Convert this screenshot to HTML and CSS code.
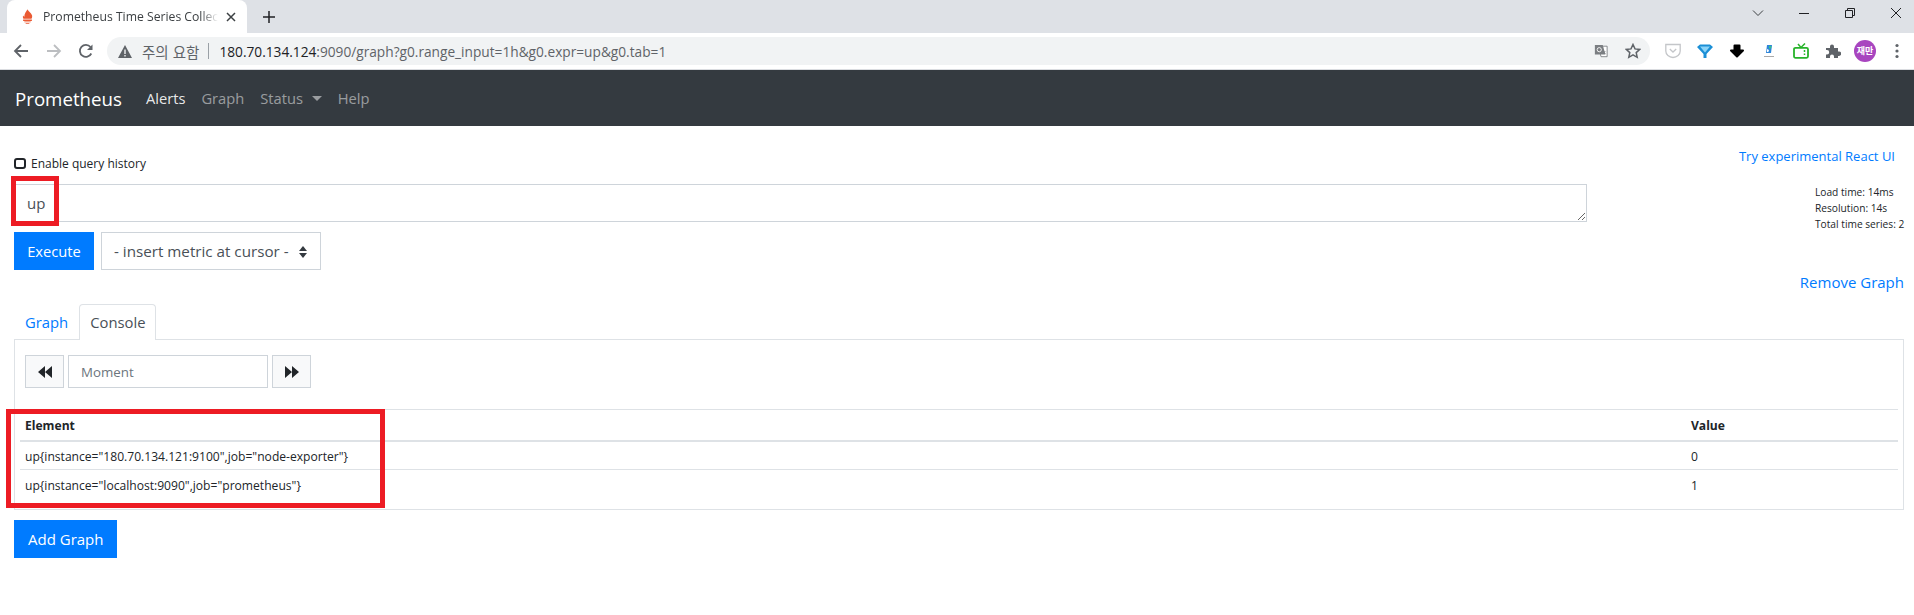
FILE: index.html
```html
<!DOCTYPE html>
<html lang="ko">
<head>
<meta charset="utf-8">
<title>Prometheus Time Series Collection and Processing Server</title>
<link rel="stylesheet" href="styles.css">
</head>
<body>
<header class="chrome">
  <div class="tabstrip">
    <div class="tab">
      <svg class="favicon" viewBox="0 0 12 16"><path fill="#ea5a33" d="M6 0c.5 2 4 3.500 5 7 .3 1.500-.2 2.800-.7 3.500H1.700C1 9.500.7 8.300 1.200 6.800c.4.700.8 1.100 1.400 1.400C2.300 5 4.600 2.800 6 0z"/><path fill="#ea5a33" d="M1.200 11.300h9.600v1.500H1.200zM2.500 13.400h7v1H2.500zM4 15h4v1H4z"/></svg>
      <span class="tab-title">Prometheus Time Series Collection and Processing Server</span>
      <svg class="tab-close" viewBox="0 0 10 10"><path d="M1 1l8 8M9 1l-8 8" stroke="#3c4043" stroke-width="1.500"/></svg>
    </div>
    <svg class="new-tab" viewBox="0 0 12 12"><path d="M6 0v12M0 6h12" stroke="#202124" stroke-width="1.500"/></svg>
    <div class="win-controls">
      <svg class="win-btn" viewBox="0 0 12 12"><path d="M1 3.500l5 5 5-5" fill="none" stroke="#3c4043"/></svg>
      <svg class="win-btn" viewBox="0 0 12 12"><path d="M1 6.500h10" stroke="#202124"/></svg>
      <svg class="win-btn" viewBox="0 0 12 12"><path d="M1.500 3.500h7v7h-7zM3.500 3.500v-2h7v7h-2" fill="none" stroke="#202124"/></svg>
      <svg class="win-btn" viewBox="0 0 12 12"><path d="M1 1l10 10M11 1L1 11" stroke="#202124"/></svg>
    </div>
  </div>
  <div class="toolbar">
    <svg class="tool back" viewBox="0 0 16 16"><path d="M15 8H2M8 2L2 8l6 6" fill="none" stroke="#5f6368" stroke-width="1.800"/></svg>
    <svg class="tool fwd" viewBox="0 0 16 16"><path d="M1 8h13M8 2l6 6-6 6" fill="none" stroke="#bcbec1" stroke-width="1.800"/></svg>
    <svg class="tool reload" viewBox="0 0 16 16"><path d="M13.300 10.500A6 6 0 1 1 12.500 4" fill="none" stroke="#5f6368" stroke-width="1.800"/><path d="M14.500 1.500V7H9z" fill="#5f6368"/></svg>
    <div class="omnibox">
      <svg class="warn" viewBox="0 0 14 13"><path d="M7 0l7 13H0z" fill="#5f6368"/><path d="M6.300 4.500h1.400v4.500H6.300zM6.300 10h1.400v1.400H6.300z" fill="#f1f3f4"/></svg>
      <span class="warn-text">주의 요함</span>
      <span class="omni-sep"></span>
      <span class="url"><span class="url-host">180.70.134.124</span>:9090/graph?g0.range_input=1h&amp;g0.expr=up&amp;g0.tab=1</span>
      <svg class="translate" viewBox="0 0 16 16"><path d="M5 2.500h10v12H8z" fill="#fff" stroke="#7b7e82"/><path d="M1 1h9l3 11H1z" fill="#7b7e82"/><circle cx="6" cy="6.500" r="2.400" fill="none" stroke="#fff"/><path d="M10 8l3 3M13 8l-3 3" stroke="#7b7e82"/></svg>
      <svg class="star" viewBox="0 0 16 16"><path d="M8 1.500l2 4.400 4.800.5-3.600 3.200 1 4.700L8 11.900l-4.200 2.400 1-4.700L1.200 6.400 6 5.900z" fill="none" stroke="#5f6368" stroke-width="1.500"/></svg>
    </div>
    <div class="extensions">
      <svg class="ext" viewBox="0 0 16 16"><path d="M.8 1.500h14.400v6.500a7.200 6.500 0 0 1-14.400 0z" fill="none" stroke="#c4c6c9" stroke-width="1.300"/><path d="M4.800 6L8 9l3.200-3" fill="none" stroke="#c4c6c9" stroke-width="1.300"/></svg>
      <svg class="ext" viewBox="0 0 16 16"><path d="M0 4l3-2.500h10L16 4 9.500 11v4h-3v-4z" fill="#1b8fd6"/><path d="M3 3.500h10L8 9.500z" fill="#8bd3f7"/></svg>
      <svg class="ext" viewBox="0 0 16 16"><path d="M5.500 2.500h5v5H14L8 13.500 2 7.500h3.500z" fill="#000" stroke="#000" stroke-width="2" stroke-linejoin="round"/></svg>
      <svg class="ext" viewBox="0 0 16 16"><path d="M6 2h5l-1 8H5z" fill="#2f86d9"/><path d="M8 3h2.500L9.800 5.500 8 5.500z" fill="#34c08a"/><path d="M6 6l2 1-.6 2H6z" fill="#fff"/><path d="M3 13.500h10" stroke="#aaa" stroke-width="1"/></svg>
      <svg class="ext" viewBox="0 0 16 16"><rect x="1" y="4.800" width="14" height="10" rx="1.500" fill="none" stroke="#27b32a" stroke-width="1.800"/><path d="M5 1l3 3.500 4-4" fill="none" stroke="#27b32a" stroke-width="1.500"/><path d="M11.500 7v2M11.500 10.500v1.500" stroke="#27b32a" stroke-width="1.500"/></svg>
      <svg class="ext" viewBox="0 0 16 16"><path d="M1 5h4V3.500a2 2 0 0 1 4 0V5h4v3.500h1a2.200 2.200 0 0 1 0 4.400h-1V15H9v-1.500a2 2 0 0 0-4 0V15H1v-3.500h1a2.200 2.200 0 0 0 0-4.400H1z" fill="#5f6368"/></svg>
      <span class="avatar">재만</span>
      <svg class="ext dots" viewBox="0 0 4 16"><circle cx="2" cy="2.500" r="1.600" fill="#5f6368"/><circle cx="2" cy="8" r="1.600" fill="#5f6368"/><circle cx="2" cy="13.500" r="1.600" fill="#5f6368"/></svg>
    </div>
  </div>
</header>

<nav class="navbar">
  <a class="brand">Prometheus</a>
  <a class="nav-link active">Alerts</a>
  <a class="nav-link">Graph</a>
  <a class="nav-link">Status <span class="caret"></span></a>
  <a class="nav-link">Help</a>
</nav>

<main class="page">
  <div class="query">
    <div class="query-left">
      <label class="history"><input class="history-box" type="checkbox"><span>Enable query history</span></label>
      <div class="expr-wrap">
        <textarea class="expr" rows="1">up</textarea>
        <div class="mark mark-expr"></div>
      </div>
      <div class="actions">
        <button class="btn-primary btn-exec">Execute</button>
        <div class="select-wrap"><select class="metric"><option>- insert metric at cursor -</option></select></div>
      </div>
    </div>
    <div class="query-right">
      <a class="react-link">Try experimental React UI</a>
      <div class="stats">Load time: 14ms<br>Resolution: 14s<br>Total time series: 2</div>
    </div>
  </div>

  <div class="remove-row"><a class="remove-link">Remove Graph</a></div>

  <div class="tabs">
    <a class="tab-link">Graph</a>
    <a class="tab-link tab-current">Console</a>
  </div>
  <section class="panel">
    <div class="moment-row">
      <button class="step"><svg viewBox="0 0 14 12"><path d="M7 0v12L0 6zM14 0v12L7 6z" fill="#212529"/></svg></button>
      <input class="moment" type="text" placeholder="Moment">
      <button class="step"><svg viewBox="0 0 14 12"><path d="M0 0v12l7-6zM7 0v12l7-6z" fill="#212529"/></svg></button>
    </div>
    <table class="results">
      <thead><tr><th class="col-el">Element</th><th>Value</th></tr></thead>
      <tbody>
        <tr><td>up{instance="180.70.134.121:9100",job="node-exporter"}</td><td>0</td></tr>
        <tr><td>up{instance="localhost:9090",job="prometheus"}</td><td>1</td></tr>
      </tbody>
    </table>
    <div class="mark mark-table"></div>
  </section>
  <button class="btn-primary add">Add Graph</button>
</main>
</body>
</html>
```
FILE: styles.css
```css
* { box-sizing: border-box; }
html, body { margin: 0; padding: 0; }
body {
  width: 1914px;
  height: 615px;
  overflow: hidden;
  background: #fff;
  color: #212529;
  font-family: "Open Sans", "Noto Sans CJK KR", sans-serif;
  font-size: 15px;
}
a { text-decoration: none; }

/* browser chrome */
.chrome { height: 70px; border-bottom: 1px solid #dadce0; }
.tabstrip {
  height: 33px;
  background: #dee1e6;
  display: flex;
  align-items: flex-start;
  padding-left: 7px;
}
.tab {
  width: 240px;
  height: 33px;
  background: #fff;
  border-radius: 8px 8px 0 0;
  display: flex;
  align-items: center;
  padding: 0 11px 0 15px;
}
.favicon { width: 11px; height: 15px; flex: none; }
.tab-title {
  flex: 1;
  margin-left: 10px;
  font-size: 12.2px;
  color: #3c4043;
  white-space: nowrap;
  overflow: hidden;
  -webkit-mask-image: linear-gradient(to right, #000 90%, transparent);
  mask-image: linear-gradient(to right, #000 90%, transparent);
}
.tab-close { width: 10px; height: 10px; flex: none; margin-left: 8px; }
.new-tab { width: 12px; height: 12px; margin: 11px 0 0 16px; flex: none; }
.win-controls {
  margin-left: auto;
  display: flex;
  gap: 34px;
  padding: 7px 12px 0 0;
}
.win-btn { width: 12px; height: 12px; display: block; }

.toolbar {
  height: 36px;
  display: flex;
  align-items: center;
  background: #fff;
  padding-left: 13px;
}
.tool { width: 16px; height: 16px; flex: none; }
.fwd { margin-left: 17px; }
.reload { margin-left: 16px; }
.omnibox {
  margin-left: 13px;
  width: 1543px;
  height: 28px;
  border-radius: 14px;
  background: #f1f3f4;
  display: flex;
  align-items: center;
  padding-left: 11px;
  color: #5f6368;
}
.warn { width: 14px; height: 13px; flex: none; }
.warn-text {
  margin-left: 10px;
  font-family: "Noto Sans CJK KR", sans-serif;
  font-size: 14.5px;
  color: #5f6368;
}
.omni-sep { width: 1px; height: 16px; background: #9aa0a6; margin: 0 10px 0 9px; }
.url { white-space: nowrap; font-size: 13.7px; }
.url-host { color: #202124; }
.translate { width: 14px; height: 14px; margin-left: auto; }
.star { width: 16px; height: 16px; margin: 0 9px 0 17px; }
.extensions {
  display: flex;
  align-items: center;
  margin-left: 15px;
  gap: 16px;
}
.ext { width: 16px; height: 16px; flex: none; display: block; }
.avatar {
  width: 22px;
  height: 22px;
  border-radius: 50%;
  background: #a845bf;
  color: #fff;
  font: 700 9px/22px "Noto Sans CJK KR", sans-serif;
  text-align: center;
  margin: 0 -3px;
  flex: none;
}
.dots { width: 4px; margin-left: 6px; }

/* navbar */
.navbar {
  height: 56px;
  background: #343a40;
  display: flex;
  align-items: center;
  padding-left: 15px;
}
.brand { font-size: 18.7px; color: #fff; margin-right: 24px; }
.nav-link { font-size: 14.7px; color: rgba(255,255,255,.5); margin-right: 16px; white-space: nowrap; }
.nav-link.active { color: rgba(255,255,255,.9); }
.caret {
  display: inline-block;
  vertical-align: 3px;
  margin-left: 5px;
  border-top: 5px solid rgba(255,255,255,.5);
  border-left: 5px solid transparent;
  border-right: 5px solid transparent;
}

/* page */
.page { padding: 0 10px 0 14px; }
.query { display: flex; justify-content: space-between; height: 144px; }
.query-left { width: 1573px; }
.history {
  display: flex;
  align-items: center;
  gap: 5px;
  height: 16px;
  margin-top: 29px;
  font-size: 12px;
}
.history-box {
  appearance: none;
  width: 12px;
  height: 11px;
  margin: 0;
  border: 2px solid #212529;
  border-radius: 3px;
  background: #fff;
  flex: none;
}
.expr-wrap { position: relative; margin-top: 13px; height: 38px; }
.expr {
  display: block;
  width: 100%;
  height: 38px;
  padding: 6px 12px;
  border: 1px solid #ced4da;
  font: 15px/24px "Open Sans", sans-serif;
  color: #495057;
  resize: vertical;
  outline: none;
  background: #fff;
}
.mark { position: absolute; border: 5px solid #ed1c24; pointer-events: none; }
.mark-expr { left: -3px; top: -8px; width: 48px; height: 50px; }
.actions { display: flex; gap: 7px; margin-top: 10px; }
.btn-primary {
  height: 38px;
  padding: 0 13px;
  border: 1px solid #007bff;
  background: #007bff;
  color: #fff;
  font: 15px "Open Sans", sans-serif;
  display: block;
}
.btn-exec { width: 80px; padding: 0; font-size: 14.7px; }
.select-wrap { position: relative; width: 220px; height: 38px; }
.select-wrap::before, .select-wrap::after {
  content: "";
  position: absolute;
  right: 14px;
  border-left: 4px solid transparent;
  border-right: 4px solid transparent;
}
.select-wrap::before { top: 14px; border-bottom: 5px solid #343a40; }
.select-wrap::after { top: 21px; border-top: 5px solid #343a40; }
.metric {
  appearance: none;
  width: 100%;
  height: 38px;
  padding: 0 12px;
  border: 1px solid #ced4da;
  background: #fff;
  color: #495057;
  font: 15.2px "Open Sans", sans-serif;
  border-radius: 0;
  outline: none;
}
.query-right { width: 176px; }
.react-link {
  display: block;
  margin-top: 20px;
  font-size: 13px;
  line-height: 20px;
  color: #007bff;
  white-space: nowrap;
  text-align: right;
  padding-right: 9px;
}
.stats {
  margin-top: 18px;
  margin-left: 87px;
  font-size: 10.2px;
  line-height: 16px;
  white-space: nowrap;
}
.remove-row { display: flex; justify-content: flex-end; height: 34px; align-items: center; margin-top: -5px; }
.remove-link { color: #007bff; font-size: 15px; }
.tabs { display: flex; height: 36px; margin-top: 5px; }
.tab-link {
  padding: 0 10px;
  line-height: 35px;
  color: #007bff;
  font-size: 14.8px;
  border: 1px solid transparent;
  border-bottom: 0;
}
.tab-current {
  padding: 0 10px;
  color: #495057;
  background: #fff;
  border-color: #dee2e6;
  border-radius: 4px 4px 0 0;
  height: 36px;
  position: relative;
  z-index: 1;
}
.panel {
  position: relative;
  height: 171px;
  margin-top: -1px;
  padding: 15px 5px 0 5px;
  border: 1px solid #dee2e6;
}
.moment-row { display: flex; gap: 4px; padding-left: 5px; }
.step {
  width: 39px;
  height: 33px;
  border: 1px solid #ced4da;
  background: #f8f9fa;
  display: flex;
  align-items: center;
  justify-content: center;
  padding: 0;
}
.step svg { width: 14px; height: 12px; display: block; }
.moment {
  width: 200px;
  height: 33px;
  padding: 0 12px;
  border: 1px solid #ced4da;
  font: 13.3px "Open Sans", sans-serif;
  outline: none;
}
.moment::placeholder { color: #6c757d; opacity: 1; }
.results {
  width: 1878px;
  margin-top: 21px;
  border-collapse: collapse;
  table-layout: fixed;
  font-size: 12.1px;
}
.col-el { width: 1666px; }
.results th, .results td { text-align: left; padding: 0 5px; border-top: 1px solid #dee2e6; }
.results th { height: 31px; padding-top: 1px; border-bottom: 2px solid #dee2e6; font-weight: 700; }
.results td { height: 29px; padding-top: 2px; }
.results tbody tr:first-child td { border-top: 0; }
.mark-table { left: -9px; top: 69px; width: 379px; height: 99px; }
.add { margin-top: 10px; }
```
